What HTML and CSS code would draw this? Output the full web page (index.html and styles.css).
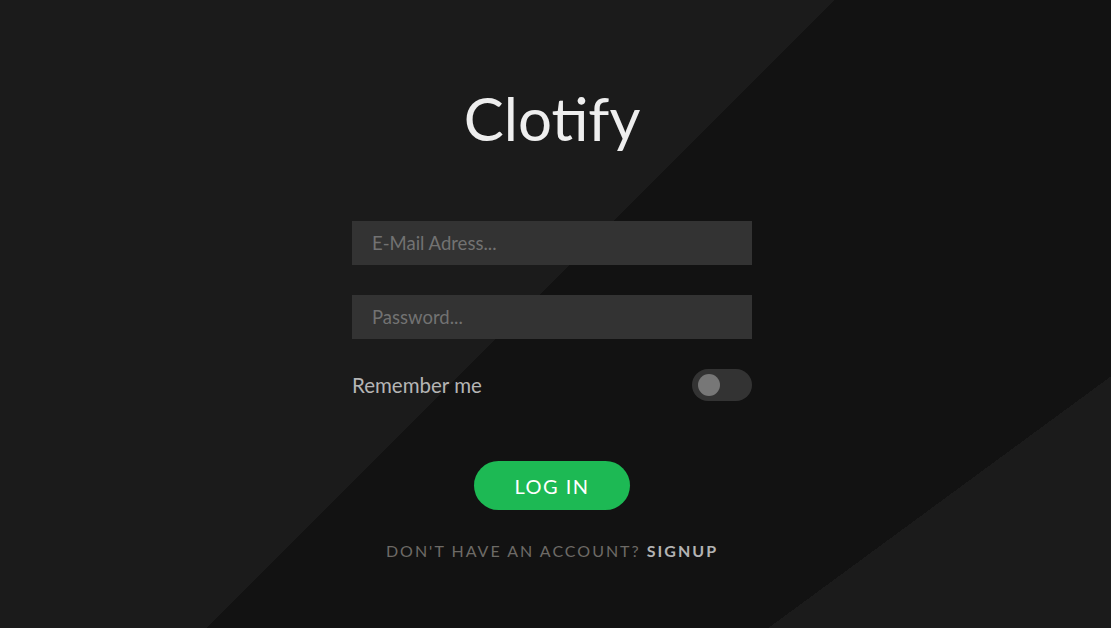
FILE: index.html
```html
<!DOCTYPE html>
<html lang="en">
<head>
<meta charset="utf-8">
<title>Clotify</title>
<link rel="stylesheet" href="styles.css">
</head>
<body>
<main class="page">
  <h1 class="logo">Clotify</h1>
  <form class="login">
    <input class="field" type="email" placeholder="E-Mail Adress...">
    <input class="field" type="password" placeholder="Password...">
    <div class="remember">
      <span class="remember-label">Remember me</span>
      <span class="toggle"><span class="knob"></span></span>
    </div>
    <button class="btn" type="button">LOG IN</button>
    <p class="signup">DON'T HAVE AN ACCOUNT? <a class="signup-link" href="#">SIGNUP</a></p>
  </form>
</main>
</body>
</html>
```

FILE: styles.css
```css
* { box-sizing: border-box; }
html, body { margin: 0; height: 100%; }
body {
  font-family: "Lato", "Noto Sans", sans-serif;
  background-color: #121212;
  background-image:
    linear-gradient(143.7deg, rgba(0,0,0,0) 961px, #1b1b1b 961px),
    linear-gradient(135deg, #1b1b1b 590px, #121212 590px);
  color: #b3b3b3;
}
.page {
  height: 100%;
  display: flex;
  flex-direction: column;
  align-items: center;
  padding-top: 82px;
  padding-right: 7px;
}
.logo {
  margin: 0;
  font-size: 60px;
  font-weight: 400;
  color: #eeeeee;
  line-height: 72px;
}
.login {
  width: 400px;
  margin-top: 67px;
  display: flex;
  flex-direction: column;
}
.field {
  height: 44px;
  border: none;
  background: #333333;
  padding: 0 20px;
  font-family: inherit;
  font-size: 18.5px;
  color: #dddddd;
  outline: none;
  margin-bottom: 30px;
}
.field::placeholder { color: #727272; }
.remember {
  display: flex;
  justify-content: space-between;
  align-items: center;
  height: 32px;
}
.remember-label {
  font-size: 20.5px;
  color: #b5b5b5;
}
.toggle {
  width: 60px;
  height: 32px;
  border-radius: 16px;
  background: #333333;
  display: flex;
  align-items: center;
  padding-left: 6px;
}
.knob {
  width: 22px;
  height: 22px;
  border-radius: 50%;
  background: #777777;
}
.btn {
  align-self: center;
  margin-top: 60px;
  width: 156px;
  height: 49px;
  border: none;
  border-radius: 25px;
  background: #1db954;
  color: #ffffff;
  font-family: inherit;
  font-size: 20px;
  letter-spacing: 1.5px;
  cursor: pointer;
}
.signup {
  margin: 31px 0 0;
  text-align: center;
  font-size: 16px;
  letter-spacing: 2px;
  color: #6d6a66;
}
.signup-link {
  color: #b3b3b3;
  font-weight: 700;
  text-decoration: none;
}
```
